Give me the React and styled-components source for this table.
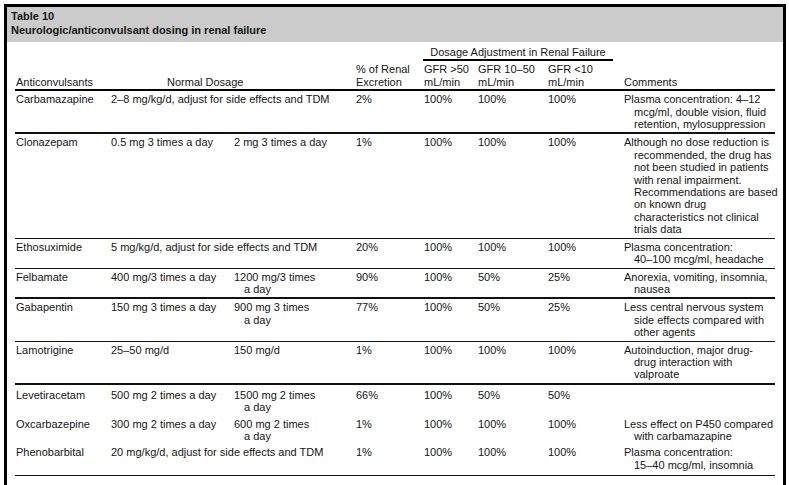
import React from "react"
import styled, { createGlobalStyle } from "styled-components"

const GlobalStyle = createGlobalStyle`
  html, body {
    margin: 0;
    padding: 0;
    overflow: hidden;
    background: #fff;
  }
  body {
    font-family: "Liberation Sans", Arial, sans-serif;
    color: #151515;
  }
`

const Frame = styled.div`
  margin: 4px 3px 0 4px;
  border: 3px solid #000;
  padding-bottom: 30px;
`

const Caption = styled.div`
  background: #cbcbcb;
  padding: 2px 4px 5px;
  font-size: 11px;
  font-weight: bold;
  line-height: 14px;
`

const Table = styled.table`
  border-collapse: collapse;
  table-layout: fixed;
  width: 760px;
  margin: 0 8px;
  font-size: 11px;
  line-height: 12.4px;
`

const GroupHead = styled.th`
  font-weight: normal;
  text-align: center;
  padding: 4px 10px 0 0;
  white-space: nowrap;
`

const GroupLabel = styled.div`
  border-bottom: 2px solid #000;
  padding-bottom: 1px;
`

const Head = styled.th`
  font-weight: normal;
  text-align: left;
  vertical-align: bottom;
  white-space: nowrap;
  padding: 2px 0 1px ${({ $indent }) => $indent || 1}px;
  border-bottom: 2px solid #000;
`

const Row = styled.tr`
  border-bottom: ${({ $rule }) => ($rule ? `${$rule}px solid #111` : "none")};

  & > td {
    padding-top: ${({ $tight }) => ($tight ? 4 : 2)}px;
    padding-bottom: ${({ $tight, $rule }) => ($tight ? ($rule ? 4 : 0) : 2)}px;
  }
`

const Cell = styled.td`
  vertical-align: top;
  white-space: nowrap;
  padding-left: 1px;
  padding-right: 0;
`

const Line = styled.div`
  padding-left: ${({ $hang }) => ($hang ? 10 : 0)}px;
`

const Lines = ({ items }) =>
  items.map((t, i) => (
    <Line key={i} $hang={i > 0}>
      {t}
    </Line>
  ))

const rows = [
  {
    name: "Carbamazapine",
    dose: "2–8 mg/kg/d, adjust for side effects and TDM",
    pct: "2%",
    gfr: ["100%", "100%", "100%"],
    notes: ["Plasma concentration: 4–12", "mcg/ml, double vision, fluid", "retention, mylosuppression"],
    rule: 2,
  },
  {
    name: "Clonazepam",
    dose: ["0.5 mg 3 times a day"],
    max: ["2 mg 3 times a day"],
    pct: "1%",
    gfr: ["100%", "100%", "100%"],
    notes: [
      "Although no dose reduction is",
      "recommended, the drug has",
      "not been studied in patients",
      "with renal impairment.",
      "Recommendations are based",
      "on known drug",
      "characteristics not clinical",
      "trials data",
    ],
    rule: 1,
  },
  {
    name: "Ethosuximide",
    dose: "5 mg/kg/d, adjust for side effects and TDM",
    pct: "20%",
    gfr: ["100%", "100%", "100%"],
    notes: ["Plasma concentration:", "40–100 mcg/ml, headache"],
    rule: 1,
  },
  {
    name: "Felbamate",
    dose: ["400 mg/3 times a day"],
    max: ["1200 mg/3 times", "a day"],
    pct: "90%",
    gfr: ["100%", "50%", "25%"],
    notes: ["Anorexia, vomiting, insomnia,", "nausea"],
    rule: 2,
  },
  {
    name: "Gabapentin",
    dose: ["150 mg 3 times a day"],
    max: ["900 mg 3 times", "a day"],
    pct: "77%",
    gfr: ["100%", "50%", "25%"],
    notes: ["Less central nervous system", "side effects compared with", "other agents"],
    rule: 1,
  },
  {
    name: "Lamotrigine",
    dose: ["25–50 mg/d"],
    max: ["150 mg/d"],
    pct: "1%",
    gfr: ["100%", "100%", "100%"],
    notes: ["Autoinduction, major drug-", "drug interaction with", "valproate"],
    rule: 2,
  },
  {
    name: "Levetiracetam",
    dose: ["500 mg 2 times a day"],
    max: ["1500 mg 2 times", "a day"],
    pct: "66%",
    gfr: ["100%", "50%", "50%"],
    notes: [],
    rule: 0,
    tight: true,
  },
  {
    name: "Oxcarbazepine",
    dose: ["300 mg 2 times a day"],
    max: ["600 mg 2 times", "a day"],
    pct: "1%",
    gfr: ["100%", "100%", "100%"],
    notes: ["Less effect on P450 compared", "with carbamazapine"],
    rule: 0,
    tight: true,
  },
  {
    name: "Phenobarbital",
    dose: "20 mg/kg/d, adjust for side effects and TDM",
    pct: "1%",
    gfr: ["100%", "100%", "100%"],
    notes: ["Plasma concentration:", "15–40 mcg/ml, insomnia"],
    rule: 1,
    tight: true,
  },
]

export default function App() {
  return (
    <>
      <GlobalStyle />
      <Frame>
        <Caption>
          <div>Table 10</div>
          <div>Neurologic/anticonvulsant dosing in renal failure</div>
        </Caption>
        <Table>
          <colgroup>
            <col style={{ width: 95 }} />
            <col style={{ width: 123 }} />
            <col style={{ width: 122 }} />
            <col style={{ width: 68 }} />
            <col style={{ width: 54 }} />
            <col style={{ width: 70 }} />
            <col style={{ width: 76 }} />
            <col style={{ width: 152 }} />
          </colgroup>
          <thead>
            <tr>
              <th colSpan={4} />
              <GroupHead colSpan={3}>
                <GroupLabel>Dosage Adjustment in Renal Failure</GroupLabel>
              </GroupHead>
              <th />
            </tr>
            <tr>
              <Head>Anticonvulsants</Head>
              <Head colSpan={2} $indent={57}>
                Normal Dosage
              </Head>
              <Head>
                % of Renal
                <br />
                Excretion
              </Head>
              <Head>
                GFR &gt;50
                <br />
                mL/min
              </Head>
              <Head>
                GFR 10–50
                <br />
                mL/min
              </Head>
              <Head>
                GFR &lt;10
                <br />
                mL/min
              </Head>
              <Head>Comments</Head>
            </tr>
          </thead>
          <tbody>
            {rows.map(r => (
              <Row key={r.name} $rule={r.rule} $tight={r.tight}>
                <Cell>{r.name}</Cell>
                {typeof r.dose === "string" ? (
                  <Cell colSpan={2}>{r.dose}</Cell>
                ) : (
                  <>
                    <Cell>
                      <Lines items={r.dose} />
                    </Cell>
                    <Cell>
                      <Lines items={r.max} />
                    </Cell>
                  </>
                )}
                <Cell>{r.pct}</Cell>
                {r.gfr.map((g, i) => (
                  <Cell key={i}>{g}</Cell>
                ))}
                <Cell>
                  <Lines items={r.notes} />
                </Cell>
              </Row>
            ))}
          </tbody>
        </Table>
      </Frame>
    </>
  )
}
